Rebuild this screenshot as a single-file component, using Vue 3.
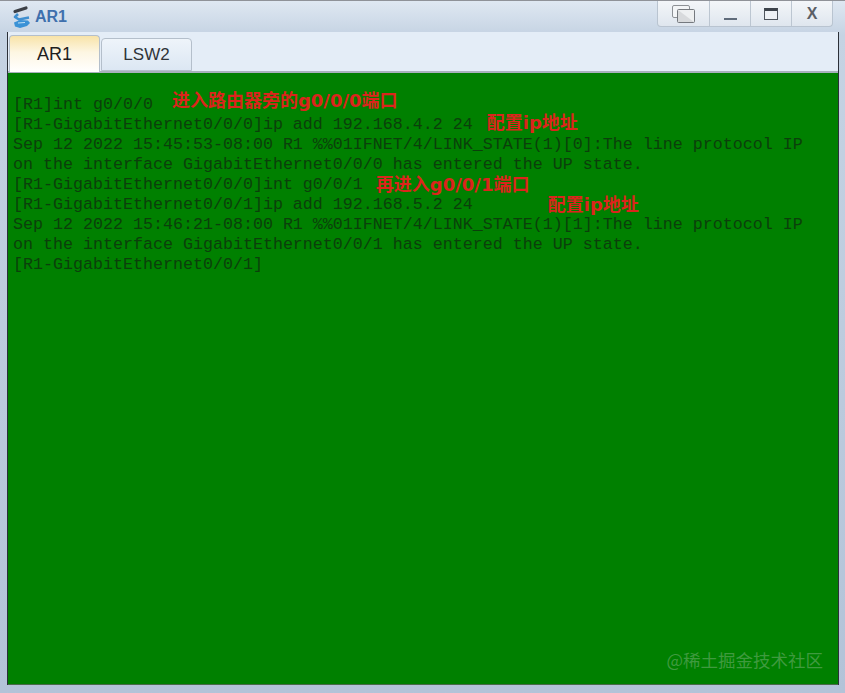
<script setup>
const lines = [
  { t: '[R1]int g0/0/0', n: '进入路由器旁的g0/0/0端口', m: 19, y: -4 },
  { t: '[R1-GigabitEthernet0/0/0]ip add 192.168.4.2 24', n: '配置ip地址', m: 14, y: -2 },
  { t: 'Sep 12 2022 15:45:53-08:00 R1 %%01IFNET/4/LINK_STATE(1)[0]:The line protocol IP' },
  { t: 'on the interface GigabitEthernet0/0/0 has entered the UP state.' },
  { t: '[R1-GigabitEthernet0/0/0]int g0/0/1', n: '再进入g0/0/1端口', m: 13, y: 0 },
  { t: '[R1-GigabitEthernet0/0/1]ip add 192.168.5.2 24', n: '配置ip地址', m: 75, y: 0 },
  { t: 'Sep 12 2022 15:46:21-08:00 R1 %%01IFNET/4/LINK_STATE(1)[1]:The line protocol IP' },
  { t: 'on the interface GigabitEthernet0/0/1 has entered the UP state.' },
  { t: '[R1-GigabitEthernet0/0/1]' }
]
</script>

<template>
  <div class="window">
    <header class="titlebar">
      <div class="title">
        <svg class="logo" width="20" height="24" viewBox="0 0 20 24">
          <path d="M3 6.5 L14 3" stroke="#3b3f46" stroke-width="3.2" stroke-linecap="round" fill="none" />
          <path d="M6 9 L3 12 L7 14.5 L17 12.5" stroke="#3f8fd0" stroke-width="2.6" fill="none" stroke-linejoin="round" />
          <path d="M2 17.5 L8 15 L16 15.5 L18 18 L15 21 L8 23 L3 21.5 Z" fill="#3a92d6" />
          <path d="M6 18 L13 17.5" stroke="#bfe0f5" stroke-width="1" fill="none" />
        </svg>
        <span>AR1</span>
      </div>
      <div class="controls">
        <button class="ctrl first" aria-label="restore">
          <svg width="26" height="20" viewBox="0 0 26 20">
            <rect x="1.5" y="1.5" width="17" height="12" rx="1.5" fill="#f3f5f7" stroke="#8d9196" />
            <rect x="6.5" y="5.5" width="17" height="13" rx="1" fill="#d8dadc" stroke="#75797e" />
            <path d="M7 6 H23 V18 Z" fill="#eef0f1" />
          </svg>
        </button>
        <button class="ctrl" aria-label="minimize"><i class="min"></i></button>
        <button class="ctrl" aria-label="maximize"><i class="max"></i></button>
        <button class="ctrl close">X</button>
      </div>
    </header>
    <div class="content">
      <nav class="tabs">
        <div class="tab active">AR1</div>
        <div class="tab">LSW2</div>
      </nav>
      <main class="terminal">
        <div v-for="(l, i) in lines" :key="i" class="line">
          <span>{{ l.t }}</span><span v-if="l.n" class="note" :style="{ marginLeft: l.m + 'px', top: l.y + 'px' }">{{ l.n }}</span>
        </div>
        <div class="mark">@稀土掘金技术社区</div>
      </main>
    </div>
  </div>
</template>

<style scoped>
.window {
  width: 845px;
  height: 693px;
  box-sizing: border-box;
  display: flex;
  flex-direction: column;
  overflow: hidden;
  padding: 0 6px 8px 7px;
  background: linear-gradient(180deg, #dfe8f2 0, #c5d3e3 34px, #b3c3d8 100%);
  border-top: 1px solid #8f9298;
  font-family: "Liberation Sans", sans-serif;
}
.titlebar {
  height: 31px;
  flex: none;
  display: flex;
  justify-content: space-between;
  align-items: flex-start;
}
.title {
  display: flex;
  align-items: center;
  gap: 3px;
  padding: 4px 0 0 5px;
  color: #3f70ad;
  font-size: 16px;
  font-weight: 700;
}
.logo { flex: none; }
.controls {
  display: flex;
  height: 25px;
  margin-right: 6px;
  border: 1px solid #b9c4d0;
  border-top: 0;
  border-radius: 0 0 4px 4px;
  background: linear-gradient(180deg, #f3f6f9, #dfe6ee);
}
.ctrl {
  width: 41px;
  height: 25px;
  padding: 0;
  border: 0;
  border-left: 1px solid #bcc6d1;
  background: transparent;
  display: flex;
  align-items: center;
  justify-content: center;
  font: 700 16px "Liberation Sans", sans-serif;
  color: #5b5f66;
}
.ctrl.first { width: 51px; border-left: 0; }
.min { width: 13px; height: 2px; margin-top: 10px; background: #5f6b7a; }
.max {
  width: 12px;
  height: 8px;
  border: 1px solid #4f555d;
  border-top: 3px solid #3d434b;
  background: #eef1f5;
}
.content {
  flex: 1;
  min-height: 0;
  display: flex;
  flex-direction: column;
  border-left: 1px solid #2b3038;
  border-right: 1px solid #2b3038;
}
.tabs {
  height: 41px;
  flex: none;
  box-sizing: border-box;
  display: flex;
  align-items: flex-end;
  gap: 1px;
  padding: 0 0 0 1px;
  background: #e4edf7;
  border-bottom: 2px solid #a8b1bc;
}
.tab {
  box-sizing: border-box;
  width: 91px;
  height: 33px;
  display: flex;
  align-items: center;
  justify-content: center;
  border: 1px solid #b4bfcb;
  border-radius: 4px 4px 0 0;
  background: linear-gradient(180deg, #eef4fa, #dce7f3);
  color: #30343a;
  font-size: 17px;
}
.tab.active {
  height: 37px;
  margin-bottom: -1px;
  border-bottom: 0;
  background: linear-gradient(180deg, #f8e3a8 0, #fdf6e2 45%, #ffffff 100%);
  color: #1f1f1f;
  font-size: 18px;
}
.terminal {
  position: relative;
  flex: 1;
  min-height: 0;
  box-sizing: border-box;
  padding: 22px 0 0 5px;
  background: #008000;
  border-bottom: 1px solid #4a6a4a;
}
.line {
  display: flex;
  align-items: center;
  height: 20px;
  white-space: pre;
  font-family: "Liberation Mono", monospace;
  font-size: 16.67px;
  line-height: 20px;
  color: #0b3f0b;
}
.note {
  font-family: "DejaVu Sans", "Noto Sans CJK SC", sans-serif;
  font-weight: 700;
  font-size: 18px;
  line-height: 20px;
  color: #dc241c;
  position: relative;
}
.mark {
  position: absolute;
  right: 15px;
  bottom: 13px;
  font-family: "Noto Sans CJK SC", sans-serif;
  font-size: 17.5px;
  line-height: 22px;
  color: #3f9a3f;
}
</style>
